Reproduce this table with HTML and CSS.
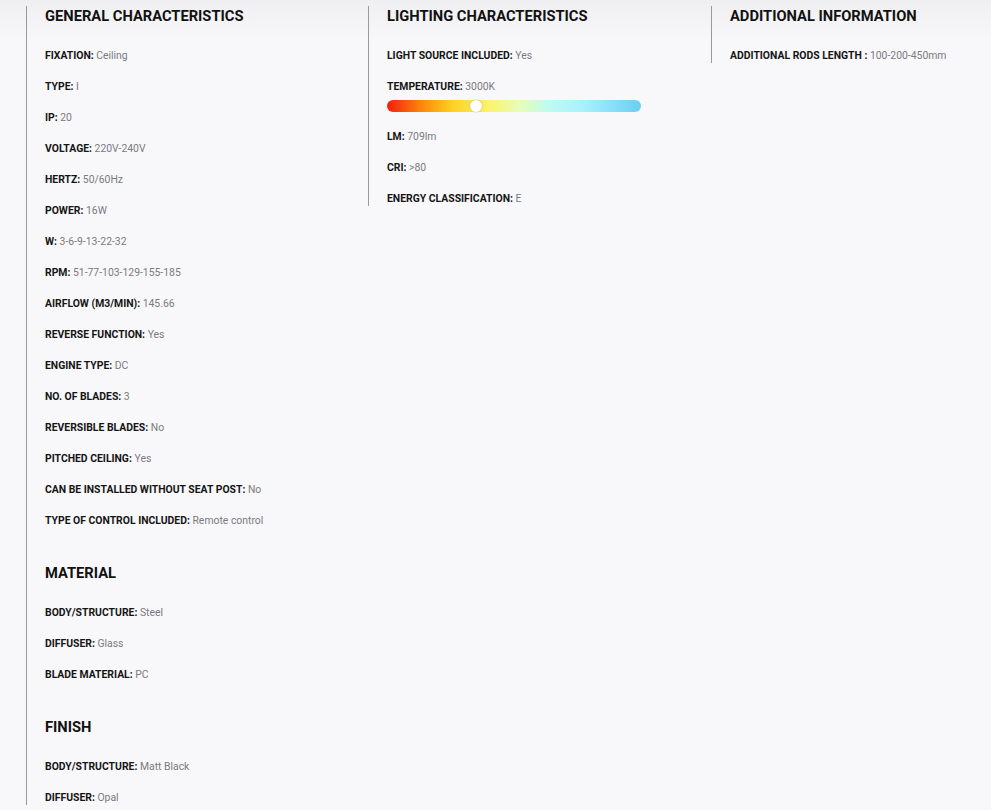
FILE: index.html
```html
<!DOCTYPE html>
<html>
  <head>
    <meta charset='utf-8'/>
    <title>Specifications</title>
    <link rel="stylesheet" href="styles.css">
  </head>
  <body>
    <div class='specs'>
      <div class='spec-column'>
        <h2>General characteristics</h2>
        <p><b>FIXATION:</b> Ceiling</p>
        <p><b>TYPE:</b> I</p>
        <p><b>IP:</b> 20</p>
        <p><b>VOLTAGE:</b> 220V-240V</p>
        <p><b>HERTZ:</b> 50/60Hz</p>
        <p><b>POWER:</b> 16W</p>
        <p><b>W:</b> 3-6-9-13-22-32</p>
        <p><b>RPM:</b> 51-77-103-129-155-185</p>
        <p><b>AIRFLOW (M3/MIN):</b> 145.66</p>
        <p><b>REVERSE FUNCTION:</b> Yes</p>
        <p><b>ENGINE TYPE:</b> DC</p>
        <p><b>NO. OF BLADES:</b> 3</p>
        <p><b>REVERSIBLE BLADES:</b> No</p>
        <p><b>PITCHED CEILING:</b> Yes</p>
        <p><b>CAN BE INSTALLED WITHOUT SEAT POST:</b> No</p>
        <p><b>TYPE OF CONTROL INCLUDED:</b> Remote control</p>

        <h2 class='next'>Material</h2>
        <p><b>BODY/STRUCTURE:</b> Steel</p>
        <p><b>DIFFUSER:</b> Glass</p>
        <p><b>BLADE MATERIAL:</b> PC</p>

        <h2 class='next'>Finish</h2>
        <p><b>BODY/STRUCTURE:</b> Matt Black</p>
        <p><b>DIFFUSER:</b> Opal</p>
      </div>

      <div class='spec-column'>
        <h2>Lighting characteristics</h2>
        <p><b>LIGHT SOURCE INCLUDED:</b> Yes</p>
        <p><b>TEMPERATURE:</b> 3000K</p>
        <div class='temp-bar'><span class='temp-knob' style='left: 35%'></span></div>
        <p><b>LM:</b> 709lm</p>
        <p><b>CRI:</b> &gt;80</p>
        <p><b>ENERGY CLASSIFICATION:</b> E</p>
      </div>

      <div class='spec-column'>
        <h2>Additional information</h2>
        <p><b>ADDITIONAL RODS LENGTH :</b> 100-200-450mm</p>
      </div>
    </div>
  </body>
</html>
```

FILE: styles.css
```css
* {
  font-family: 'Roboto', 'Liberation Sans', sans-serif;
}

html, body {
  margin: 0;
  min-height: 100%;
}

body {
  background: linear-gradient(#efeff1, #f8f8fa 40px) #f8f8fa;
}

.specs {
  display: grid;
  grid-template-columns: 342px 343px 1fr;
  align-items: start;
  margin-left: 26px;
  padding-top: 6px;
}

.spec-column {
  border-left: 1px solid #9a9a9a;
  padding-left: 18px;
}

h2 {
  margin: 0;
  font-size: 14.7px;
  line-height: 21px;
  font-weight: 700;
  text-transform: uppercase;
  color: #111;
}

h2.next {
  margin-top: 35px;
}

p {
  margin: 16px 0 0;
  font-size: 10.4px;
  line-height: 15px;
  color: #7a7a80;
}

h2 + p {
  margin-top: 21px;
}

p b {
  font-weight: 700;
  color: #151515;
}

.temp-bar {
  position: relative;
  width: 254px;
  height: 12px;
  margin-top: 6px;
  border-radius: 6px;
  background: linear-gradient(to right, #f21f0c 0%, #fb8a0a 14%, #fdd223 26%, #fbf36c 40%, #e8fcb8 52%, #bdfbf2 64%, #a5f1fd 78%, #6bcdf2 100%);
}

.temp-knob {
  position: absolute;
  top: 0;
  width: 12px;
  height: 12px;
  margin-left: -6px;
  border-radius: 50%;
  background: #fff;
  box-shadow: 0 0 2px rgba(0, 0, 0, 0.25);
}

.temp-bar + p {
  margin-top: 17px;
}
```
